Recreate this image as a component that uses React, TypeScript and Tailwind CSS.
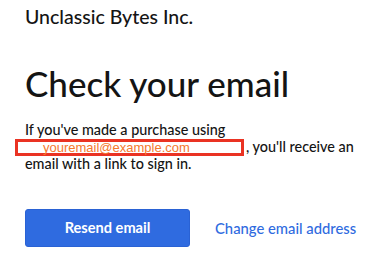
import React from 'react'

export default function App() {
  return (
    <div className="min-h-screen bg-white px-[25px] pt-[5px] font-['Lato','Noto_Sans',sans-serif] text-[#141414]">
      {/* Brand */}
      <div className="text-[19.5px] leading-[24px] font-medium">Unclassic Bytes Inc.</div>

      {/* Heading */}
      <h1 className="mt-[32px] text-[35px] leading-[44px] font-medium">Check your email</h1>

      {/* Message */}
      <p className="mt-[16px] text-[14.4px] leading-[17px] font-medium">
        If you've made a purchase using{' '}
        <span className="relative inline-block h-[12px] w-[221px] align-baseline">
          <span className="absolute -left-[10px] -top-[1px] flex h-[17px] w-[229px] items-center border-[3px] border-[#ea3323] bg-white pl-[25px] font-['Liberation_Sans',Arial,sans-serif] text-[13px] leading-none font-normal text-[#f5792e]">
            youremail@example.com
          </span>
        </span>
        , you'll receive an email with a link to sign in.
      </p>

      {/* Actions */}
      <div className="mt-[37px] flex items-center gap-[25px]">
        <button className="h-[38px] w-[165px] rounded-[3px] border border-[#2a62d4] bg-[#2f6be0] text-[14.6px] font-bold text-white">
          Resend email
        </button>
        <a href="#" className="text-[14.8px] font-medium text-[#2f6be0]">
          Change email address
        </a>
      </div>
    </div>
  )
}
